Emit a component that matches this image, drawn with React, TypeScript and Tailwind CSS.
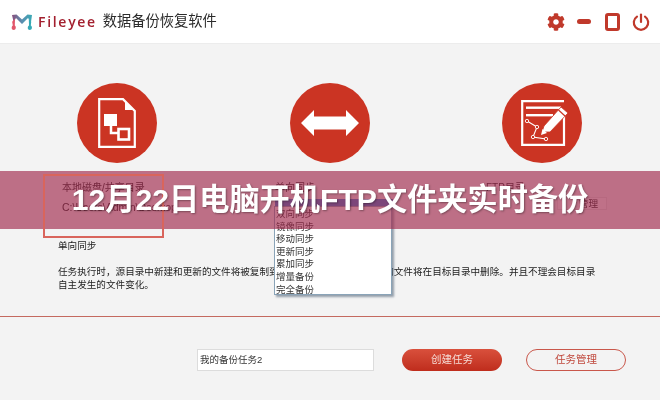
import { FaCog } from "react-icons/fa";

const font = { cjk: "font-['Liberation_Sans','Noto_Sans_CJK_SC',sans-serif]" };

function Logo() {
  return (
    <svg width="22" height="16" viewBox="0 0 22 16" className="shrink-0">
      <defs>
        <linearGradient id="logoTop" x1="0" y1="0" x2="1" y2="0">
          <stop offset="0" stopColor="#8a4f7d" />
          <stop offset="0.5" stopColor="#5a8fb0" />
          <stop offset="1" stopColor="#3aa9b5" />
        </linearGradient>
      </defs>
      <path d="M1 1 L5.5 0.5 L11 5.5 L16.5 0.5 L21 1 L20 8 L17 4 L11 10 L5 4 L2.6 8 Z" fill="url(#logoTop)" />
      <path d="M1.2 8 C1.6 6.5 3 5.5 4 5 L3.8 11.5 C5.6 13 4.8 16 2.8 16 C0.4 16 0 13 1.8 11.5 Z" fill="#e2566a" />
      <path d="M17.8 5 C19 5.5 20 6.5 20.2 8 L19.8 11.5 C21.8 13 21 16 18.8 16 C16.6 16 16 13 18 11.5 Z" fill="#35a9b5" />
    </svg>
  );
}

function DocIcon() {
  return (
    <svg width="38" height="50" viewBox="0 0 38 50">
      <path d="M1.2 1.2 H25 L36.8 13 V48.8 H1.2 Z" fill="none" stroke="#fff" strokeWidth="2.2" />
      <path d="M27 3 L35 12 H27 Z" fill="#fff" />
      <rect x="6" y="16" width="13" height="12" fill="#fff" />
      <path d="M13 27 V35 H20" stroke="#fff" strokeWidth="2.5" fill="none" />
      <rect x="20.5" y="31" width="10.5" height="10.5" fill="none" stroke="#fff" strokeWidth="2.6" />
    </svg>
  );
}

function ArrowsIcon() {
  return (
    <svg width="58" height="26" viewBox="0 0 58 26">
      <path d="M0 13 L13 0 V6.5 H45 V0 L58 13 L45 26 V19.5 H13 V26 Z" fill="#fff" />
    </svg>
  );
}

function EditIcon() {
  return (
    <svg width="48" height="46" viewBox="0 0 48 46" className="ml-[6px]">
      <path d="M43 16 V44.8 H1.2 V1.2 H43" fill="none" stroke="#fff" strokeWidth="2.2" />
      <rect x="5" y="6.5" width="35" height="2.4" fill="#fff" />
      <rect x="5" y="14" width="27" height="2.4" fill="#fff" />
      <path d="M6 21 L16 27 L12 37 L25 39" fill="none" stroke="#fff" strokeWidth="1.1" />
      <circle cx="6" cy="21" r="1.7" fill="#cb3423" stroke="#fff" strokeWidth="0.9" />
      <circle cx="16" cy="27" r="1.7" fill="#cb3423" stroke="#fff" strokeWidth="0.9" />
      <circle cx="12" cy="37" r="1.7" fill="#cb3423" stroke="#fff" strokeWidth="0.9" />
      <circle cx="25" cy="39" r="1.7" fill="#cb3423" stroke="#fff" strokeWidth="0.9" />
      <path d="M21 32 L23 26 L40 7 L47 13 L29 32 Z" fill="#fff" stroke="#cb3423" strokeWidth="0.8" />
      <path d="M37.5 10 L44 16" stroke="#cb3423" strokeWidth="1.2" />
      <path d="M20 35 L21.5 29 L26 33 Z" fill="#fff" />
    </svg>
  );
}

function Circle({ children }: { children: React.ReactNode }) {
  return (
    <div className="flex h-20 w-20 items-center justify-center rounded-full bg-[#cb3423]">
      {children}
    </div>
  );
}

const syncOptions = ["双向同步", "镜像同步", "移动同步", "更新同步", "累加同步", "增量备份", "完全备份"];

export default function App() {
  return (
    <div className={`relative h-[400px] w-[660px] overflow-hidden bg-[#f3f3f3] blur-[0.3px] ${font.cjk}`}>
      <header className="flex h-[44px] items-center border-b border-[#ececec] bg-white pl-[11px] pr-[10px]">
        <Logo />
        <span className="ml-[5px] font-['Open_Sans',sans-serif] text-[14px] font-semibold tracking-[1.7px] text-[#a3202f]">
          Fileyee
        </span>
        <span className="ml-[6px] text-[14.25px] text-[#2b2b2b]">数据备份恢复软件</span>
        <div className="ml-auto flex items-center text-[#c0392b]">
          <FaCog size={18} />
          <span className="ml-[12px] h-[5px] w-[14px] rounded-full bg-[#c0392b]" />
          <span className="ml-[14px] h-[18px] w-[15px] rounded-[3px] border-[3px] border-[#c0392b]" />
          <svg width="18" height="18" viewBox="0 0 18 18" className="ml-[12px]" fill="none" stroke="#c0392b" strokeWidth="2.2" strokeLinecap="round">
            <path d="M5 3.6 A7.2 7.2 0 1 0 13 3.6" />
            <path d="M9 1.5 V9" />
          </svg>
        </div>
      </header>

      <section className="grid grid-cols-[234px_192px_232px] pt-[39px]">
        <div className="flex justify-center"><Circle><DocIcon /></Circle></div>
        <div className="flex justify-center"><Circle><ArrowsIcon /></Circle></div>
        <div className="flex justify-center"><Circle><EditIcon /></Circle></div>
      </section>

      <section className="relative mt-[16px] px-[58px] text-[9.6px] leading-[13px] text-[#222]">
        <div className="grid h-[54px] grid-cols-[217px_211px_1fr] pt-[2px] text-[10px]">
          <div className="pl-[4px]">
            <div>本地磁盘/共享目录</div>
            <div className="mt-[7px] text-[10.5px]">C:\Users\Admin\Desktop</div>
          </div>
          <div>
            <div>单向同步</div>
            <div className="mt-[5px] h-[9px] w-[118px] bg-[#3a7fd0]" />
          </div>
          <div>
            <div>FTP目录</div>
            <div className="ml-[71px] mt-[3px] flex h-[13px] w-[50px] items-center justify-end border border-[#e2e2e2] bg-[#f8f8f8] pr-[8px] text-[9.6px]">管理</div>
          </div>
        </div>
        <p className="mt-[6px]">单向同步</p>
        <p className="mt-[13px] w-[560px]">
          任务执行时，源目录中新建和更新的文件将被复制到目标目录，源目录中删除的文件将在目标目录中删除。并且不理会目标目录
          <br />
          自主发生的文件变化。
        </p>

        <div className="absolute left-[43px] top-[-5px] z-10 h-[64px] w-[121px] border-2 border-[#d9655c]" />
        <ul className="absolute left-[274px] top-[27px] h-[89px] w-[118px] border border-[#8aa4b8] bg-white pl-[1px] pt-[1px] text-[9.5px] leading-[12.6px] text-[#333] shadow-[2px_2px_2px_rgba(70,90,110,0.55)]">
          {syncOptions.map((o) => (
            <li key={o}>{o}</li>
          ))}
        </ul>
      </section>

      <div className="mt-[25px] h-px w-full bg-[#c4695f]" />

      <footer className="flex items-center pl-[197px] pt-[32px]">
        <div className="flex h-[22px] w-[177px] items-center border border-[#dcdcdc] bg-white pl-[2px] text-[9.5px] text-[#333]">
          我的备份任务2
        </div>
        <button className="ml-[28px] h-[22px] w-[100px] rounded-full bg-gradient-to-b from-[#d9503c] to-[#bf2c1c] text-[10.5px] text-[#f6dcd6]">
          创建任务
        </button>
        <button className="ml-[24px] h-[22px] w-[100px] rounded-full border border-[#c9574b] text-[10.5px] text-[#c0483c]">
          任务管理
        </button>
      </footer>

      <div className="absolute inset-x-0 top-[171px] flex h-[58px] items-center justify-center bg-[rgba(160,40,75,0.65)]">
        <h1 className="relative z-20 text-[30.2px] font-bold leading-none text-white [text-shadow:1px_1px_2px_rgba(0,0,0,0.35)]">
          12月22日电脑开机FTP文件夹实时备份
        </h1>
      </div>
    </div>
  );
}
